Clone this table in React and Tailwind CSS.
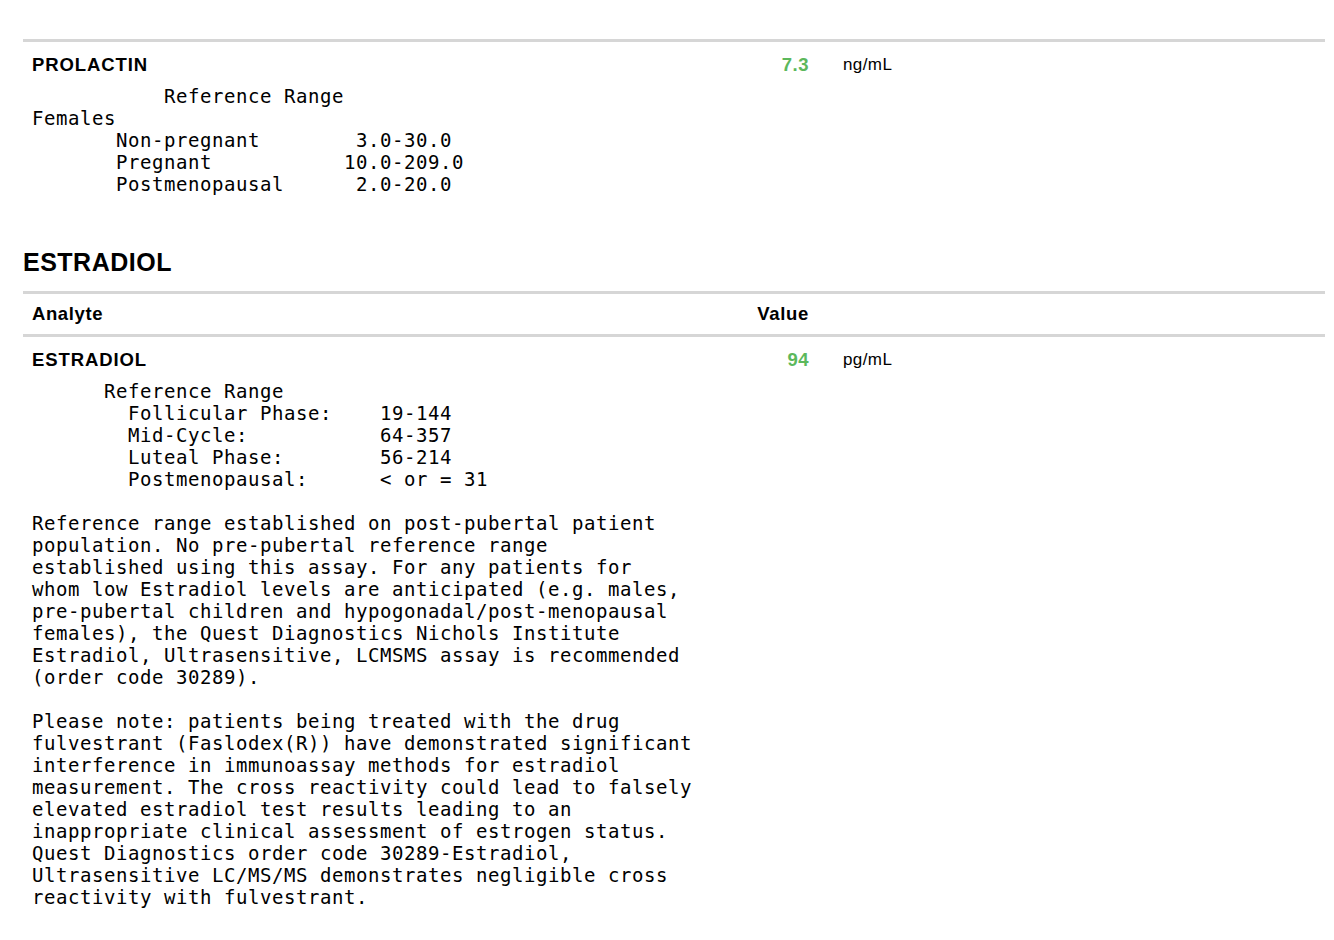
const mono = { fontFamily: '"DejaVu Sans Mono", monospace' };

const prolactinRange = `           Reference Range
Females
       Non-pregnant        3.0-30.0
       Pregnant           10.0-209.0
       Postmenopausal      2.0-20.0`;

const estradiolRange = `      Reference Range
        Follicular Phase:    19-144
        Mid-Cycle:           64-357
        Luteal Phase:        56-214
        Postmenopausal:      < or = 31

Reference range established on post-pubertal patient
population. No pre-pubertal reference range
established using this assay. For any patients for
whom low Estradiol levels are anticipated (e.g. males,
pre-pubertal children and hypogonadal/post-menopausal
females), the Quest Diagnostics Nichols Institute
Estradiol, Ultrasensitive, LCMSMS assay is recommended
(order code 30289).

Please note: patients being treated with the drug
fulvestrant (Faslodex(R)) have demonstrated significant
interference in immunoassay methods for estradiol
measurement. The cross reactivity could lead to falsely
elevated estradiol test results leading to an
inappropriate clinical assessment of estrogen status.
Quest Diagnostics order code 30289-Estradiol,
Ultrasensitive LC/MS/MS demonstrates negligible cross
reactivity with fulvestrant.`;

const ResultRow = ({ name, value, unit, note }) => (
  <div className="border-t-[3px] border-[#d6d6d6] pl-[9px] pt-[12px]">
    <div className="grid grid-cols-[715px_62px_auto] items-start">
      <div className="text-[18.5px] leading-[22px] font-bold tracking-[0.9px] text-black">{name}</div>
      <div className="text-right text-[18.5px] leading-[22px] font-bold text-[#5cb85c] tracking-[0.5px]">{value}</div>
      <div className="pl-[34px] text-[17px] leading-[22px] text-black tracking-[0.4px]">{unit}</div>
    </div>
    <pre
      className="mt-[9px] text-[19px] leading-[22px] tracking-[0.56px] text-black whitespace-pre"
      style={mono}
    >
      {note}
    </pre>
  </div>
);

export default function App() {
  return (
    <div
      className="min-h-[940px] bg-white pl-[23px] pr-[9px] pt-[39px] pb-6"
      style={{ fontFamily: '"Liberation Sans", Arial, sans-serif' }}
    >
      <ResultRow name="PROLACTIN" value="7.3" unit="ng/mL" note={prolactinRange} />

      <h2 className="mt-[52px] text-[25px] leading-[30px] font-bold tracking-[0.5px] text-black">ESTRADIOL</h2>

      <div className="mt-[14px] border-t-[3px] border-[#d6d6d6] pl-[9px] py-[9px]">
        <div className="grid grid-cols-[715px_62px_auto] items-start">
          <div className="text-[18.5px] leading-[22px] font-bold tracking-[0.6px] text-black">Analyte</div>
          <div className="text-right text-[18.5px] leading-[22px] font-bold tracking-[0.7px] text-black">Value</div>
          <div />
        </div>
      </div>

      <ResultRow name="ESTRADIOL" value="94" unit="pg/mL" note={estradiolRange} />
    </div>
  );
}
